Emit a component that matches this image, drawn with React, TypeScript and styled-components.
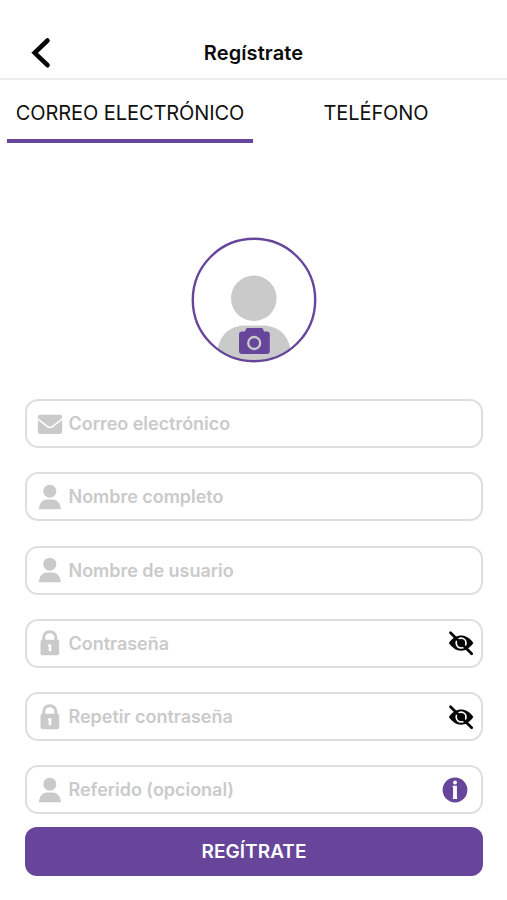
import React from "react";
import styled, { createGlobalStyle } from "styled-components";

const PURPLE = "#66459b";
const GREY = "#cacaca";

const GlobalStyle = createGlobalStyle`
  * { box-sizing: border-box; }
  body { margin: 0; background: #fff; font-family: Inter, "Liberation Sans", sans-serif; }
  button, input { font-family: inherit; }
`;

const Screen = styled.div`
  width: 507px;
  height: 900px;
  display: flex;
  flex-direction: column;
  background: #fff;
  overflow: hidden;
`;

const Header = styled.header`
  height: 80px;
  flex: none;
  padding: 27px 30px 0;
  display: grid;
  grid-template-columns: 24px 1fr 24px;
  align-items: center;
  border-bottom: 2px solid #ededed;
`;

const IconButton = styled.button`
  display: flex;
  padding: 0;
  border: 0;
  background: none;
`;

const Title = styled.h1`
  margin: 0;
  text-align: center;
  font-size: 20px;
  line-height: 24px;
  font-weight: 600;
  letter-spacing: 0.1px;
  color: #0b0b0b;
`;

const Tabs = styled.nav`
  display: grid;
  grid-template-columns: 246px 246px;
  padding-left: 7px;
  flex: none;
`;

const Tab = styled.button<{ $active?: boolean }>`
  height: 63px;
  padding: 6px 0 0;
  border: 0;
  border-bottom: 4px solid ${(p) => (p.$active ? PURPLE : "transparent")};
  background: none;
  font-size: 20px;
  letter-spacing: -0.07px;
  white-space: nowrap;
  color: #111;
`;

const AvatarArea = styled.div`
  display: flex;
  justify-content: center;
  padding: 94px 0 36px 1px;
  flex: none;
`;

const Form = styled.form`
  width: 458px;
  margin-left: 25px;
  display: flex;
  flex-direction: column;
`;

const Fields = styled.div`
  display: flex;
  flex-direction: column;
  gap: 24.3px;
  margin-bottom: 12.5px;
`;

const Field = styled.label<{ $end: number }>`
  height: 49px;
  display: flex;
  align-items: center;
  padding: 0 ${(p) => p.$end}px 0 10px;
  border: 2px solid #dedede;
  border-radius: 13px;
`;

const Input = styled.input`
  flex: 1;
  min-width: 0;
  height: 30px;
  margin-left: 5.5px;
  padding: 0;
  border: 0;
  outline: 0;
  background: transparent;
  font-size: 18px;
  font-weight: 600;
  letter-spacing: -0.03px;
  &::placeholder { color: #cacaca; opacity: 1; }
`;

const Submit = styled.button`
  height: 49px;
  padding: 0;
  border: 0;
  border-radius: 12px;
  background: ${PURPLE};
  color: #fff;
  font-size: 19px;
  font-weight: 600;
  letter-spacing: 0.05px;
`;

const BackIcon = () => (
  <svg width="24" height="34" viewBox="0 0 24 34" fill="none" stroke="#050505" strokeWidth="4.6" strokeLinecap="round" strokeLinejoin="miter">
    <path d="M17.500 4.500 4.700 16.800 17.500 29.200" />
  </svg>
);

const Avatar = () => (
  <svg width="126" height="126" viewBox="0 0 126 126">
    <clipPath id="avatar-clip"><circle cx="63" cy="63" r="61" /></clipPath>
    <g clipPath="url(#avatar-clip)" fill={GREY}>
      <circle cx="62.8" cy="61.3" r="22.8" />
      <path d="M25 124C26 99 37 88.500 55 88.500H71C89 88.500 100 99 101 124Z" />
    </g>
    <circle cx="63" cy="63" r="61.2" fill="none" stroke={PURPLE} strokeWidth="2.4" />
    <path fill={PURPLE} d="M56.500 91H70.500Q71.500 91 72 92L73 94.500H76Q78.800 94.500 78.800 97.500V114Q78.800 117 76 117H51Q48 117 48 114V97.500Q48 94.500 51 94.500H54L55 92Q55.500 91 56.500 91Z" />
    <circle cx="63.200" cy="106" r="6" fill="none" stroke={GREY} strokeWidth="2.300" />
  </svg>
);

const MailIcon = () => (
  <svg width="26" height="26" viewBox="0 0 26 26" fill={GREY}>
    <path d="M3 3.700H23Q25.200 3.700 25.200 6V7L15.200 14.700Q13 16.400 10.800 14.700L.8 7V6Q.8 3.700 3 3.700Z" />
    <path d="M.8 9.100 10.100 16.200Q13 18.300 15.900 16.200L25.200 9.100V20.600Q25.200 22.900 23 22.900H3Q.8 22.900.8 20.600Z" />
  </svg>
);

const UserIcon = () => (
  <svg width="26" height="26" viewBox="0 0 26 26" fill={GREY}>
    <circle cx="12.800" cy="7.200" r="6.500" />
    <path d="M1.900 25.200V24Q3.200 15.500 10.300 15.500H15.300Q22.500 15.500 23.800 24V25.200Z" />
  </svg>
);

const LockIcon = () => (
  <svg width="26" height="26" viewBox="0 0 26 26">
    <path d="M6.700 12V7.700C6.700-.3 18.900-.3 18.900 7.700V12" fill="none" stroke={GREY} strokeWidth="3" />
    <rect x="3.500" y="9.800" width="18.700" height="15.400" rx="2" fill={GREY} />
    <path d="M11 14.600Q12.500 13.700 14.300 14.600V21.200H11.700V16.600H11Z" fill="#fff" />
  </svg>
);

const EyeOffIcon = () => (
  <svg width="26" height="26" viewBox="0 0 26 26">
    <path d="M.8 13.100C5 7.600 8.500 5.600 13.100 5.600S21.200 7.600 25.400 13.100C21.200 18.700 17.700 20.700 13.100 20.700S5 18.700.8 13.100Z" fill="#050505" />
    <circle cx="13.100" cy="13.100" r="4.900" fill="none" stroke="#fff" strokeWidth="1.700" />
    <path d="M2.500 2.700 23.700 23.800" stroke="#050505" strokeWidth="2.700" strokeLinecap="round" />
  </svg>
);

const InfoIcon = () => (
  <svg width="26" height="26" viewBox="0 0 26 26">
    <circle cx="13" cy="13" r="12.400" fill={PURPLE} />
    <circle cx="13" cy="5.500" r="2" fill="#fff" />
    <path d="M10.600 8.800H14.900V20.600Q15.500 21 15.300 22H10.700Q10.500 21 11.100 20.600V10.300H10.600Z" fill="#fff" />
  </svg>
);

type FieldData = { label: string; icon: () => React.JSX.Element; end?: "eye" | "info" };

const fields: FieldData[] = [
  { label: "Correo electrónico", icon: MailIcon },
  { label: "Nombre completo", icon: UserIcon },
  { label: "Nombre de usuario", icon: UserIcon },
  { label: "Contraseña", icon: LockIcon, end: "eye" },
  { label: "Repetir contraseña", icon: LockIcon, end: "eye" },
  { label: "Referido (opcional)", icon: UserIcon, end: "info" },
];

export default function App() {
  return (
    <Screen>
      <GlobalStyle />
      <Header>
        <IconButton aria-label="Volver"><BackIcon /></IconButton>
        <Title>Regístrate</Title>
      </Header>
      <Tabs>
        <Tab $active>CORREO ELECTRÓNICO</Tab>
        <Tab>TELÉFONO</Tab>
      </Tabs>
      <AvatarArea>
        <IconButton aria-label="Foto de perfil"><Avatar /></IconButton>
      </AvatarArea>
      <Form onSubmit={(e) => e.preventDefault()}>
        <Fields>
          {fields.map(({ label, icon: Icon, end }) => (
            <Field key={label} $end={end === "info" ? 13 : 7}>
              <Icon />
              <Input placeholder={label} type={end === "eye" ? "password" : "text"} />
              {end === "eye" && <IconButton type="button" aria-label="Mostrar contraseña"><EyeOffIcon /></IconButton>}
              {end === "info" && <IconButton type="button" aria-label="Información"><InfoIcon /></IconButton>}
            </Field>
          ))}
        </Fields>
        <Submit>REGÍTRATE</Submit>
      </Form>
    </Screen>
  );
}
